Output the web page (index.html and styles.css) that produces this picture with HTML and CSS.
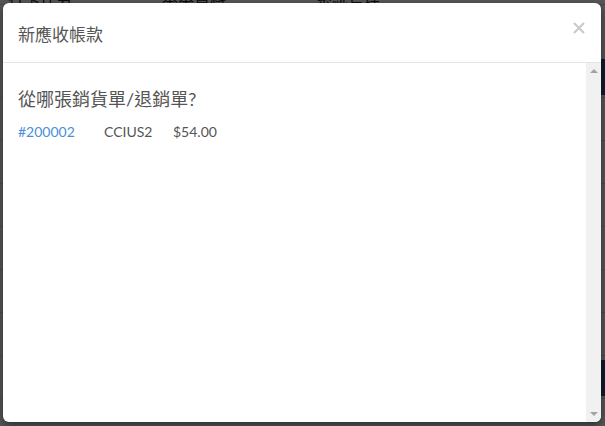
FILE: index.html
```html
<!DOCTYPE html>
<html lang="zh-Hant">
<head>
<meta charset="utf-8">
<title>新應收帳款</title>
<link rel="stylesheet" href="styles.css">
</head>
<body>
<div class="page">
  <nav class="nav">
    <span>打卡任务</span><span>基本資料</span><span>系統管理</span>
  </nav>
  <div class="rows">
    <div class="row"><span class="blue"></span></div>
    <div class="row"></div>
    <div class="row"></div>
    <div class="row"></div>
    <div class="row"></div>
    <div class="row"></div>
    <div class="row"></div>
    <div class="row"><span class="blue"></span></div>
  </div>
</div>
<div class="backdrop"></div>
<div class="modal">
  <header class="modal-header">
    <h4 class="modal-title">新應收帳款</h4>
    <button class="close" aria-label="Close">
      <svg width="12" height="12" viewBox="0 0 12 12"><path d="M1 1 L11 11 M11 1 L1 11" stroke="#c8c8c8" stroke-width="2" fill="none"/></svg>
    </button>
  </header>
  <div class="modal-main">
    <div class="modal-body">
      <h3 class="question">從哪張銷貨單/退銷單?</h3>
      <div class="invoice">
        <a class="inv-no" href="#">#200002</a>
        <span class="inv-cust">CCIUS2</span>
        <span class="inv-amt">$54.00</span>
      </div>
    </div>
    <div class="scrollbar">
      <span class="arrow up"></span>
      <span class="arrow down"></span>
    </div>
  </div>
</div>
</body>
</html>
```

FILE: styles.css
```css
html, body {
  margin: 0;
  padding: 0;
  height: 100%;
}
body {
  background: #fff;
  font-family: Lato, "Noto Sans CJK TC", sans-serif;
  overflow: hidden;
  position: relative;
}
.page {
  height: 426px;
}
.nav {
  display: flex;
  gap: 90px;
  padding-left: 8px;
  height: 14px;
  font-size: 16px;
  line-height: 1;
  margin-top: -10px;
  color: #222;
  border-bottom: 1px solid #ddd;
}
.rows {
  padding-top: 50px;
}
.row {
  height: 42px;
  border-bottom: 1px solid #ddd;
  position: relative;
}
.blue {
  position: absolute;
  right: 0;
  top: 4px;
  width: 30px;
  height: 36px;
  background: #2f4f8a;
}
.backdrop {
  position: absolute;
  inset: 0;
  background: rgba(0, 0, 0, 0.66);
}
.modal {
  position: absolute;
  left: 3px;
  top: 3px;
  width: 598px;
  height: 419px;
  background: #fff;
  border-radius: 6px;
  box-shadow: 0 3px 9px rgba(0, 0, 0, 0.5);
  display: flex;
  flex-direction: column;
  overflow: hidden;
}
.modal-header {
  height: 60px;
  box-sizing: border-box;
  border-bottom: 1px solid #e5e5e5;
  display: flex;
  align-items: center;
  padding: 2px 16px 0 15px;
  flex: none;
}
.modal-title {
  margin: 0;
  font-size: 17px;
  font-weight: 400;
  color: #555;
}
.close {
  margin-left: auto;
  align-self: flex-start;
  margin-top: 17px;
  border: 0;
  background: none;
  padding: 0;
  width: 12px;
  height: 12px;
  display: block;
}
.close svg {
  display: block;
}
.modal-main {
  flex: 1;
  display: flex;
  min-height: 0;
}
.modal-body {
  flex: 1;
  padding: 23px 15px;
  box-sizing: border-box;
}
.scrollbar {
  width: 15px;
  flex: none;
  background: #f1f1f1;
  display: flex;
  flex-direction: column;
  justify-content: space-between;
  align-items: center;
  padding: 6px 0 6px;
  box-sizing: border-box;
}
.arrow {
  width: 0;
  height: 0;
  border-left: 4px solid transparent;
  border-right: 4px solid transparent;
}
.arrow.up {
  border-bottom: 4px solid #a3a3a3;
}
.arrow.down {
  border-top: 4px solid #a3a3a3;
}
.question {
  margin: 0 0 10px;
  font-size: 18px;
  font-weight: 400;
  color: #555;
  line-height: 26px;
}
.invoice {
  display: flex;
  font-size: 14px;
  line-height: 20px;
  color: #555;
}
.inv-no {
  color: #4a8fd8;
  text-decoration: none;
  width: 86px;
}
.inv-cust {
  width: 69px;
}
```
